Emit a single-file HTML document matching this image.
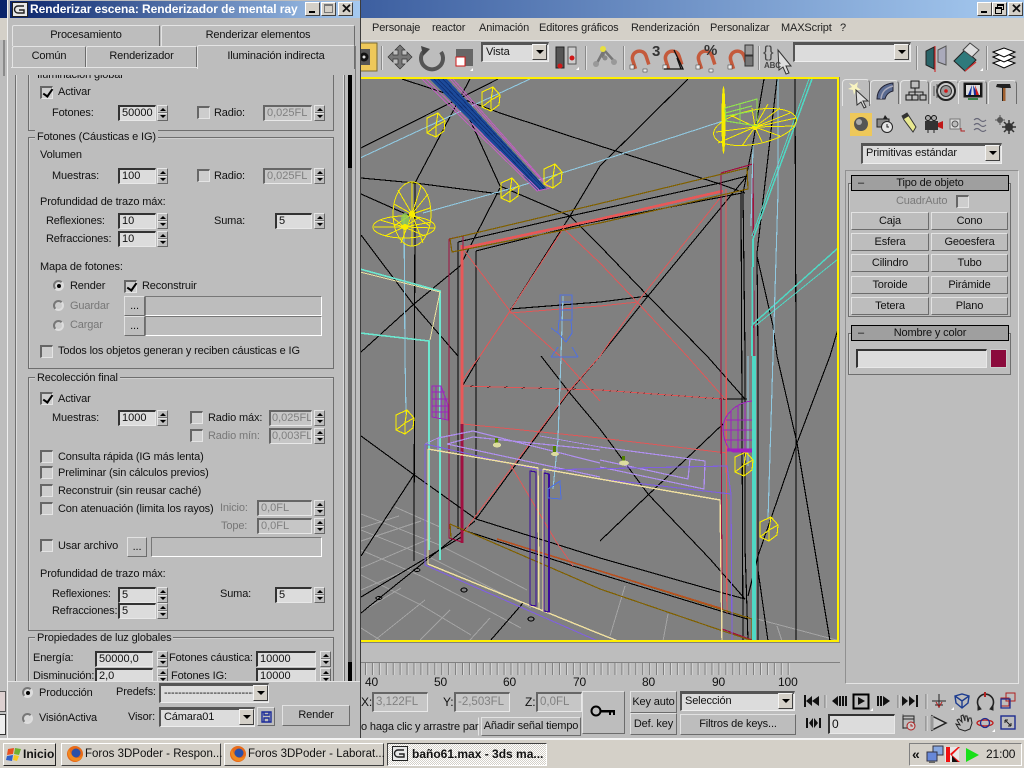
<!DOCTYPE html>
<html><head><meta charset="utf-8"><title>3ds max</title>
<style>
html,body{margin:0;padding:0;width:1024px;height:768px;overflow:hidden;background:#bdbdbd}
*{box-sizing:border-box}
#r{position:relative;width:1024px;height:768px;overflow:hidden;font:11px/14px "Liberation Sans",sans-serif;color:#111;letter-spacing:-.14px}
#r div,#r i,#r svg,#r span{position:absolute}
.t{white-space:nowrap}
.g{color:#777}
.i{background:#dcdcdc;border-top:2px solid #333;border-left:2px solid #333;border-right:1px solid #e8e8e8;border-bottom:1px solid #e8e8e8;padding-left:2px;white-space:nowrap;line-height:12px;font-style:normal;font-size:11px;letter-spacing:0}
.d{background:#c6c6c6;color:#808080;border-top:2px solid #666;border-left:2px solid #666;padding-left:2px}
.sp{width:11px;height:16px;border:1px solid;border-color:#e6e6e6 #666 #666 #e6e6e6;background:linear-gradient(#bdbdbd 0 6px,#777 6px 7px,#e6e6e6 7px 8px,#bdbdbd 8px)}
.sp::before,.sp::after{content:"";position:absolute;left:2px;border-left:3px solid transparent;border-right:3px solid transparent}
.sp::before{top:2px;border-bottom:3px solid #000}
.sp::after{bottom:2px;border-top:3px solid #000}
.cb{width:13px;height:13px;background:#cdcdcd;border-top:2px solid #666;border-left:2px solid #666;border-right:1px solid #e4e4e4;border-bottom:1px solid #e4e4e4}
.ck::after{content:"";position:absolute;left:3px;top:-1px;width:4px;height:8px;border:solid #000;border-width:0 2px 2px 0;transform:rotate(35deg)}
.ra{width:11px;height:11px;border-radius:50%;background:#d8d8d8;border:2px solid;border-color:#777 #ddd #ddd #777}
.ro::after{content:"";position:absolute;left:1.5px;top:1.5px;width:4px;height:4px;border-radius:50%;background:#000}
.gr{border:1px solid #6e6e6e;box-shadow:inset 1px 1px 0 #cfcfcf}
.lb{background:#bdbdbd;padding:0 2px}
.b{background:#bdbdbd;border:1px solid;border-color:#e2e2e2 #6c6c6c #6c6c6c #e2e2e2;text-align:center;white-space:nowrap;font-size:11px}
.f{border:1px solid;border-color:#777 #fff #fff #777;background:#bdbdbd}
.sel{background:#dcdcdc;border-top:3px solid #555;border-left:2px solid #555;border-right:1px solid #eee;border-bottom:1px solid #eee;white-space:nowrap;padding-left:3px;font-size:11px;line-height:14px}
.ar{width:15px;height:16px;background:#d4d0c8;border:1px solid;border-color:#f4f4f4 #404040 #404040 #f4f4f4}
.ar::after{content:"";position:absolute;left:3px;top:5px;border-left:4px solid transparent;border-right:4px solid transparent;border-top:4px solid #000}
.sep{width:2px;background:#8a8a8a;border-right:1px solid #e2e2e2}
.m{top:21px;font-size:11px;white-space:nowrap;color:#222}
.tb{top:743px;height:23px;background:#d4d0c8;border:1px solid;border-color:#fff #404040 #404040 #fff;white-space:nowrap;font-size:11.5px;line-height:21px;letter-spacing:0}
.wb{width:15px;height:14px;top:2px;background:#d4d0c8;border:1px solid;border-color:#fff #404040 #404040 #fff}
.tab{background:#bdbdbd;border:1px solid #e4e4e4;border-right:1px solid #6c6c6c;border-bottom:0;border-radius:2px 2px 0 0;text-align:center;font-size:11px;line-height:19px}
.rh{background:#9f9f9f;border:1px solid #000;text-align:center;font-size:11px;line-height:14px;height:16px}
.ct{width:29px;height:24px;top:80px;background:#bdbdbd;border:1px solid #e4e4e4;border-right:1px solid #6c6c6c;border-bottom:0;border-radius:4px 4px 0 0}
</style></head><body><div id="r">

<!-- main title -->
<div style="left:0;top:0;width:1024px;height:18px;background:linear-gradient(90deg,#0a246a 0,#3d5fa0 360px,#a6caf0 1024px)"></div>
<div class="wb" style="left:977px"><i style="left:3px;bottom:2px;width:6px;height:2px;background:#000"></i></div>
<div class="wb" style="left:992px"><i style="left:4px;top:1px;width:7px;height:6px;border:1px solid #000;border-top-width:2px"></i><i style="left:2px;top:4px;width:7px;height:7px;border:1px solid #000;border-top-width:2px;background:#d4d0c8"></i></div>
<div class="wb" style="left:1008px"><span class="t" style="left:2px;top:-1px;font-size:13px;font-weight:bold">✕</span></div>
<div style="left:360px;top:18px;width:664px;height:22px;background:#d4d0c8"></div>
<span class="m" style="left:372px">Personaje</span>
<span class="m" style="left:432px">reactor</span>
<span class="m" style="left:479px">Animación</span>
<span class="m" style="left:539px">Editores gráficos</span>
<span class="m" style="left:631px">Renderización</span>
<span class="m" style="left:710px">Personalizar</span>
<span class="m" style="left:781px">MAXScript</span>
<span class="m" style="left:840px">?</span>

<!-- toolbar -->
<div style="left:360px;top:40px;width:664px;height:37px;background:#bdbdbd;border-top:1px solid #e4e4e4"></div>
<svg style="left:360px;top:41px" width="664" height="36" viewBox="360 41 664 36">
 <rect x="360" y="43" width="17" height="28" fill="#eec85a" stroke="#7a6a30"/>
 <rect x="360" y="49" width="10" height="16" fill="#555"/><circle cx="364" cy="57" r="4.500" fill="#111"/><circle cx="364" cy="57" r="1.500" fill="#ddd"/>
 <path d="M400 45l5 5h-3v5h5v-3l5 5-5 5v-3h-5v5h3l-5 5-5-5h3v-5h-5v3l-5-5 5-5v3h5v-5h-3z" fill="#777" stroke="#333" stroke-width=".7"/>
 <path d="M423 52a11 11 0 1 0 18 0" fill="none" stroke="#555" stroke-width="4"/><path d="M421 46l9 3-7 7z" fill="#444"/>
 <rect x="456" y="49" width="17" height="17" fill="#666"/><rect x="456" y="57" width="9" height="9" fill="#fff" stroke="#d01818"/>
 <rect x="556" y="47" width="8" height="21" fill="#555" stroke="#222"/><circle cx="560" cy="66" r="2.500" fill="#d01818"/>
 <rect x="568" y="47" width="8" height="17" fill="#ccc" stroke="#555"/><circle cx="572" cy="58" r="2.500" fill="#d01818"/>
 <path d="M604 50l-7 13M604 50l10 11M604 50l-1 8" stroke="#777" stroke-width="2.500"/><circle cx="603" cy="49" r="3" fill="#e8e040"/><circle cx="596" cy="64" r="3" fill="#999"/><circle cx="614" cy="62" r="3" fill="#999"/><circle cx="605" cy="58" r="2.500" fill="#888"/>
 <g fill="none" stroke="#c45a3c" stroke-width="3.500">
 <path id="mg" d="M633 67V58a7 7 0 0 1 14 0V67" transform="rotate(-18 640 60)"/><path d="M666 67V58a7 7 0 0 1 14 0V67" transform="rotate(-18 673 60)"/><path d="M699 67V58a7 7 0 0 1 14 0V67" transform="rotate(-18 706 60)"/><path d="M731 67V58a7 7 0 0 1 14 0V67" transform="rotate(-18 738 60)"/></g>
 <g fill="#eee" stroke="#333" stroke-width=".5"><rect x="630" y="65" width="4" height="4"/><rect x="643" y="69" width="4" height="3"/><rect x="663" y="65" width="4" height="4"/><rect x="696" y="65" width="4" height="4"/><rect x="709" y="69" width="4" height="3"/><rect x="728" y="65" width="4" height="4"/></g>
 <path d="M664 69H683L674 50" fill="none" stroke="#111" stroke-width="1.3"/><path d="M677 58l4 11" stroke="#111" stroke-width="1.3"/>
 <rect x="745" y="45" width="8" height="10" fill="#999" stroke="#333"/><rect x="745" y="56" width="8" height="10" fill="#777" stroke="#333"/>
 <path d="M934 47v22l-8-4v-14z" fill="#2a6468" stroke="#222"/><path d="M935 46v26" stroke="#d03030" stroke-width="1.200"/><path d="M938 50l8-4v19l-8-3z" fill="#aab" stroke="#555"/>
 <path d="M954 61l11-11 11 10-11 11z" fill="#2f7a7c" stroke="#222"/><path d="M963 50l7-7 9 7-7 7z" fill="#ddd" stroke="#444"/><path d="M965 71l11-9" stroke="#d03030" stroke-width="1.300"/>
 <g fill="#fff" stroke="#000"><path d="M993 63l11-4 11 4-11 5z"/><path d="M993 57l11-4 11 4-11 5z"/><path d="M993 52l11-4 11 4-11 5z"/></g>
 <path d="M576 70h3v-3z" fill="#fff"/><path d="M470 71h3v-3z" fill="#fff"/><path d="M980 71h3v-3z" fill="#fff"/>
 <path d="M778 50l13 16-5 0 3 7-3 1-3-7-4 3z" fill="#ddd" stroke="#333"/>
</svg>
<span class="t" style="left:763px;top:46px;font-size:16px;color:#444">{}</span>
<span class="t" style="left:764px;top:59px;font-size:8px;font-weight:bold;color:#444">ABC</span>
<span class="t" style="left:652px;top:45px;font-size:15px;font-weight:bold;color:#333">3</span>
<span class="t" style="left:704px;top:44px;font-size:15px;font-weight:bold;color:#333">%</span>
<i class="sep" style="left:381px;top:46px;height:24px"></i><i class="sep" style="left:585px;top:46px;height:24px"></i><i class="sep" style="left:623px;top:46px;height:24px"></i><i class="sep" style="left:758px;top:46px;height:24px"></i><i class="sep" style="left:916px;top:46px;height:24px"></i><i class="sep" style="left:986px;top:46px;height:24px"></i>
<div class="sel" style="left:481px;top:42px;width:68px;height:20px">Vista</div><i class="ar" style="left:532px;top:44px"></i>
<div class="sel" style="left:793px;top:42px;width:118px;height:20px"></div><i class="ar" style="left:894px;top:44px"></i>

<!-- viewport -->
<svg style="left:360px;top:77px" width="480" height="566" viewBox="360 77 480 566" shape-rendering="crispEdges">
<defs>
 <g id="c" fill="none" stroke="#f8ec00" stroke-width="1.100"><path d="M-9-7L2-12 9-4 8 6 0 12-9 8zM9-4L0 1-9 8M2-12L0 1 0 12"/></g>
</defs>
<rect x="360" y="77" width="480" height="566" fill="#808080"/>
<!-- floor grid -->
<g fill="none" stroke="#a4a4a4" stroke-width="1">
 <path d="M361 528l38-12M361 541l60-20M361 568l70-30M361 590l50-22M361 612l40-24M375 640l50-40M420 640l30-30M470 640l20-22M361 514l36 14 40 16 40 20 50 26M361 530l70 28 60 30 40 20M361 550l60 26 70 36 30 16M361 575l60 30 50 30M395 507l45 20M380 640l-19-12"/>
 <path d="M625 586l-15 50M668 614l-5 27M757 619l83 22M777 626l5 15"/>
</g>
<!-- black -->
<g fill="none" stroke="#000" stroke-width="1.100">
 <path d="M498 79L361 148M402 79L460 98 500 113 600 146 720 184 745 193M470 79L415 183 414 561"/>
 <path d="M460 98L500 186 570 216M500 188L460 266 414 304 361 352"/>
 <path d="M361 178L415 183 500 194M361 194L415 218M361 235L413 304 458 356M361 436L413 474 476 519M415 473L361 556"/>
 <path d="M458 242V529M476 251V519M458 242L570 216 720 183 747 176M476 251L583 224 742 193M476 519L600 558 723 593 745 599M460 529L573 566 747 619"/>
 <path d="M688 79L600 166 570 216 510 311 480 356 463 385M747 176L648 296 600 356 569 392 476 519M570 216L600 246 648 296 707 356 745 399M541 356L569 392 600 429 648 494 710 559 745 599M723 424L647 496 600 541"/>
 <path d="M510 309L600 302 648 296M463 386L600 390 723 399 747 399"/>
 <path d="M361 597L463 536M361 613L475 521M490 641L523 603"/>
 <path d="M764 79L753 143 743 193 745 356 745 547 748 641M795 79L796 356 796 641M777 79L757 253 758 356 758 570 768 641M757 256L773 326 777 356 797 443 830 641M830 356L797 443 758 556 748 596M838 329L830 356M758 570V641"/>
 <path d="M741 193L743 641"/>
</g>
<g fill="none" stroke="#000" stroke-width="1"><ellipse cx="417" cy="570" rx="3" ry="1.500"/><ellipse cx="379" cy="598" rx="3" ry="1.500"/><ellipse cx="464" cy="590" rx="3" ry="2"/><ellipse cx="531" cy="619" rx="3" ry="2"/></g>
<!-- salmon -->
<g fill="none" stroke="#e05858" stroke-width="1">
 <path d="M563 229L510 311 480 356 463 379M463 249L510 311 560 356 600 401M563 228L600 263 638 303 687 356 725 399M720 198L640 299 600 356 569 391 463 533M510 313L600 306 638 302M463 386L600 390 723 399M463 424L600 438 727 453M510 464L557 543 573 566"/>
</g>
<path d="M463 248L600 219 723 191" fill="none" stroke="#e85858" stroke-width="2.600"/>
<path d="M462 245V424" stroke="#e85858" stroke-width="3"/><path d="M462 424V543" stroke="#a01040" stroke-width="3"/>
<path d="M726 189V356L727 613" fill="none" stroke="#e85858" stroke-width="1.400"/>
<!-- crimson -->
<g fill="none" stroke="#a01040" stroke-width="1.200">
 <path d="M449 239V538L462 542M449 239L463 236V250M721 173L753 164 754 356V640M721 173V356L722 629 752 640"/>
</g>
<!-- olive -->
<g fill="none" stroke="#806000" stroke-width="1.200">
 <path d="M450 239L598 204 747 168 748 189 600 223 452 252zM450 524L600 589 723 631 750 640M450 524L451 538M600 571L752 619V640"/>
</g>
<path d="M497 539L600 571 723 609" stroke="#b85020" stroke-width="1.600" fill="none"/>
<!-- teal -->
<g fill="none" stroke="#4fd8c4">
 <path d="M812 79L753 239" stroke-width="1.500"/><path d="M809 79L752 236" stroke-width="1"/><path d="M753 239L752 356" stroke-width="2"/><path d="M754 356V641" stroke-width="4"/>
 <path d="M838 248L753 324" stroke-width="1.500"/><path d="M838 259L755 326" stroke-width="1"/>
 <path d="M360 269L440 291V560M360 333L429 341V550" stroke-width="1.600" stroke="#6ce8d0"/>
</g>
<!-- lightblue -->
<g fill="none" stroke="#90c8e0" stroke-width="1.100">
 <path d="M778 79L778 193 773 356 768 519M723 121L600 161 520 186 423 213M530 79L360 158M404 216L405 356 406 414M753 146L751 226M748 356V466M563 296L561 356 558 439 553 489"/>
</g>
<path d="M360 272L440 292 430 340" stroke="#e8e0a0" fill="none"/>
<!-- beam -->
<path d="M430 79H447L547 189 538 191z" fill="#1c4a9a"/>
<g stroke="#0e2c70" stroke-width=".8"><path d="M434 79L541 190M438 79L544 189M443 79L546 189"/></g>
<g fill="none" stroke="#c060c0" stroke-width="1"><path d="M422 79L537 191 550 188 453 79M426 79L540 191M450 79L548 187"/></g>
<!-- yellow cubes -->
<use href="#c" x="436" y="125"/><use href="#c" x="491" y="99"/><use href="#c" x="510" y="190"/><use href="#c" x="553" y="176"/><use href="#c" x="405" y="422"/><use href="#c" x="744" y="464"/><use href="#c" x="769" y="529"/>
<!-- spot left -->
<g fill="none" stroke="#f8ec00" stroke-width="1">
 <ellipse cx="412" cy="214" rx="19" ry="32"/><ellipse cx="404" cy="227" rx="31" ry="11"/>
 <path d="M412 214V182M412 214L421 186M412 214L428 194M412 214L430 208M412 214L430 226M412 214L423 243M412 214V246M412 214L401 243M412 214L394 226M412 214L394 204M412 214L398 190M404 227L374 227M404 227L380 220M404 227L392 217M404 227L420 217M404 227L432 222M404 227L435 228M404 227L425 236M404 227L404 238M404 227L385 236"/>
</g>
<ellipse cx="405" cy="220" rx="4" ry="7" fill="#90d050" opacity=".8"/>
<circle cx="412" cy="214" r="3" fill="#f8ec00"/><circle cx="405" cy="227" r="3" fill="#f8ec00"/>
<!-- spot right -->
<g fill="none" stroke="#f8ec00" stroke-width="1">
 <ellipse cx="755" cy="127" rx="42" ry="17" transform="rotate(-11 755 127)"/>
 <path d="M755 127L790 113M755 127L796 118M755 127L780 108M755 127L795 126M755 127L780 136M755 127L762 142M755 127L742 146M755 127L718 143M755 127L716 132M755 127L730 115M755 127L752 108M755 127L768 104"/>
</g>
<ellipse cx="723.500" cy="120" rx="2" ry="34" fill="#f8ec00"/>
<circle cx="755" cy="127" r="3" fill="#f8ec00"/>
<g fill="none" stroke="#90e050" stroke-width="1.200"><path d="M725 108L757 99 757 126 726 121zM725 113L752 106M726 116L753 111M740 104V123"/></g>
<!-- counter -->
<g fill="none" stroke="#b090f0" stroke-width="1.200">
 <path d="M438 438L473 431 600 463M438 452V438M447 444L600 477M447 444L473 437 600 450M600 447L690 459 705 461 704 489 600 467M690 459L688 479 600 460"/>
 <path d="M425 444L438 438M600 447L540 436" stroke-width=".8"/>
</g>
<g fill="none" stroke="#8060e0" stroke-width="1.100"><path d="M425 444V565L600 642M425 444L540 470 727 466 731 494 732 640M600 479L731 494"/></g>
<g fill="none" stroke="#f0e0a0" stroke-width="1.400"><path d="M428 449L538 468 539 609M428 449V564L600 634 618 641M543 469L600 479 720 500 722 641M543 469V611"/></g>
<g fill="none" stroke="#3a0a9a" stroke-width="1.200"><path d="M530 471V605L536 606V472zM544 473V611L549 612V474z"/></g>
<path d="M549 474V612" stroke="#3a0a9a" stroke-width="2.200"/>
<!-- purple mesh -->
<g fill="none" stroke="#a020c0" stroke-width="1"><path d="M432 386H441L448 405V420L432 417zM432 392H445M432 399H448M432 406H448M432 412H448M436 386V418M441 386V419M445 396V420"/></g>
<g fill="none" stroke="#a020c0" stroke-width="1"><path d="M752 401C735 403 724 415 723 427 723 438 727 449 733 452H752M745 402V451M738 405V452M731 411V451M726 420H752M723 430H752M724 440H752"/></g>
<path d="M727 450L752 450" stroke="#a020c0" stroke-width="2.600"/>
<!-- blue lamp -->
<g fill="none" stroke="#4f70e0" stroke-width="1"><path d="M560 295H572V320H560zM561 302H571M561 310H571M559 320L558 333 566 342 572 333 571 320M551 328L558 333M551 357H578M551 357L558 347M578 357L572 347M548 489L560 481 561 499 548 498z"/></g>
<!-- bulbs -->
<g><rect x="495" y="438" width="3" height="6" fill="#508000"/><ellipse cx="497" cy="445" rx="4" ry="2.500" fill="#dcdca0"/><rect x="553" y="446" width="3" height="8" fill="#508000"/><ellipse cx="555" cy="454" rx="4" ry="2" fill="#dcdca0"/><rect x="622" y="456" width="3" height="8" fill="#508000"/><ellipse cx="624" cy="463" rx="5" ry="2.500" fill="#dcdca0"/></g>
<!-- frame -->
<path d="M360 78H838V641H361" fill="none" stroke="#ffef00" stroke-width="2"/>
</svg>

<!-- timeline -->
<div style="left:361px;top:662px;width:479px;height:1px;background:#808080"></div>
<svg style="left:361px;top:663px" width="430" height="14"><defs><pattern id="tk" width="6.930" height="12" patternUnits="userSpaceOnUse" x="4"><rect width="1" height="12" fill="#7c7c7c"/><rect x="1" width="1" height="12" fill="#d8d8d8"/></pattern></defs><rect width="430" height="12" fill="url(#tk)"/></svg>
<span class="t" style="left:365px;top:675px;font-size:12px">40</span>
<span class="t" style="left:434px;top:675px;font-size:12px">50</span>
<span class="t" style="left:503px;top:675px;font-size:12px">60</span>
<span class="t" style="left:573px;top:675px;font-size:12px">70</span>
<span class="t" style="left:642px;top:675px;font-size:12px">80</span>
<span class="t" style="left:712px;top:675px;font-size:12px">90</span>
<span class="t" style="left:778px;top:675px;font-size:12px">100</span>

<!-- status -->
<span class="t" style="left:361px;top:695px;font-size:12px">X:</span><div class="i d" style="left:372px;top:692px;width:56px;height:20px;line-height:16px;font-size:11.5px">3,122FL</div>
<span class="t" style="left:443px;top:695px;font-size:12px">Y:</span><div class="i d" style="left:454px;top:692px;width:56px;height:20px;line-height:16px;font-size:11.5px">-2,503FL</div>
<span class="t" style="left:525px;top:695px;font-size:12px">Z:</span><div class="i d" style="left:536px;top:692px;width:46px;height:20px;line-height:16px;font-size:11.5px">0,0FL</div>
<div class="b" style="left:582px;top:691px;width:43px;height:43px"></div>
<svg style="left:590px;top:704px" width="28" height="16"><circle cx="6" cy="7" r="4.500" fill="none" stroke="#000" stroke-width="2"/><path d="M11 6H25V11H23V8.500H21V11H19V8.500H11z" fill="#000"/></svg>
<div class="f" style="left:361px;top:717px;width:118px;height:19px;border-color:#bdbdbd #e4e4e4 #bdbdbd #bdbdbd"></div>
<span class="t" style="left:361px;top:720px;font-size:11px">o haga clic y arrastre par</span>
<div class="b" style="left:481px;top:717px;width:100px;height:19px;line-height:17px">Añadir señal tiempo</div>
<div class="b" style="left:630px;top:691px;width:47px;height:22px;line-height:21px">Key auto</div>
<div class="b" style="left:630px;top:713px;width:47px;height:22px;line-height:21px">Def. key</div>
<div class="sel" style="left:680px;top:691px;width:115px;height:20px">Selección</div><i class="ar" style="left:778px;top:693px"></i>
<div class="b" style="left:680px;top:714px;width:116px;height:21px;line-height:19px">Filtros de keys...</div>
<svg style="left:800px;top:690px" width="224" height="46" viewBox="800 690 224 46">
 <g fill="#111">
 <path d="M804 695h2v12h-2zM806 701l6-5v10zM812 701l7-5v10z"/>
 <path d="M832 701l6-5v10zM839 696h2v10h-2zM842 696h2v10h-2zM845 696h2v10h-2z"/>
 <rect x="853.500" y="694.500" width="15" height="14" fill="none" stroke="#000" stroke-width="2"/><path d="M858 697l7 4-7 4z"/>
 <path d="M877 696h2v10h-2zM880 696h2v10h-2zM883 696l7 5-7 5z"/>
 <path d="M902 696l6 5-6 5zM909 696l6 5-6 5zM916 695h2v12h-2z"/>
 <path d="M807 718h2v10h-2zM810 723l4-5v10zM815 718l4 5-4 5zM820 718h2v10h-2z" transform="translate(-1 0)"/>
 </g>
 <path d="M825 695v13M898 695v13M926 694v15M926 716v15M903 714v15" stroke="#777"/><path d="M826 695v13M899 695v13M927 694v15M927 716v15" stroke="#e4e4e4"/>
 <g fill="none" stroke="#222" stroke-width="1">
  <path d="M903 716h11v12h-11zM903 719h11"/><circle cx="911" cy="726" r="4" stroke="#b02020" fill="#ccc"/><path d="M911 724v2h2" stroke="#b02020"/>
  <path d="M932 701h14M939 694v14M935 705h8"/><path d="M936 702l3 5 3-5" stroke="#b02020"/>
  <path d="M955 696l7-2 7 2-1 7-6 5-6-5zM955 696l7 5 7-5M962 701v7" stroke="#1c3c90" stroke-width="1.400"/>
  <path d="M980 708a8 8 0 1 1 11 0" stroke-width="1.600"/><path d="M985 692v5" stroke="#b02020" stroke-width="2"/><path d="M978 706l3 3-3 1zM993 706l-3 3 3 1z" fill="#222"/>
  <path d="M1001 698h8v8h-8zM1006 693h9v8h-9z" stroke="#b02020"/><path d="M1001 699h9v9h-9z" stroke="#1c2c90" stroke-width="1.300"/>
  <path d="M932 716l14 7-14 7z" stroke-width="1.500" fill="#ccc"/><path d="M932 716v14" stroke="#999" stroke-width="3"/>
  <path d="M956 724l3 5 6 2 5-2 2-6-1-5-2 0-1 4-1-6-2 0 0 5-2-6-2 1 1 6-3-3-2 1 3 5z" fill="#bbb"/>
  <ellipse cx="985" cy="723" rx="8" ry="3" stroke="#c01818" stroke-width="1.300"/><circle cx="985" cy="723" r="4.500" stroke="#1c2c90" stroke-width="1.300" fill="none"/>
  <rect x="1001" y="716" width="14" height="13" stroke="#1c2c90" stroke-width="1.400"/><path d="M1005 720l6 6M1005 720v3M1005 720h3M1011 726v-3M1011 726h-3"/>
 </g>
 <path d="M951 710h3v-3z" fill="#fff"/><path d="M870 711h3v-3z" fill="#fff"/><path d="M992 732h3v-3z" fill="#fff"/>
</svg>
<div class="i" style="left:828px;top:714px;width:67px;height:20px;line-height:16px;font-size:12px">0</div>

<!-- command panel -->
<div style="left:840px;top:78px;width:184px;height:610px;background:#bdbdbd"></div>
<div class="ct" style="left:842px;top:79px;width:28px;height:27px;border-bottom:0;background:#bdbdbd"></div>
<div class="ct" style="left:870px"></div><div class="ct" style="left:900px"></div><div class="ct" style="left:930px"></div><div class="ct" style="left:958px"></div><div class="ct" style="left:988px"></div>
<svg style="left:840px;top:78px" width="184" height="64" viewBox="840 78 184 64">
 <path d="M852 87l-3-4 5 2 4-3-1 5 4 3-5 0-2 5-1-5-5-1z" fill="#f8f4c0"/>
 <path d="M856 90l12 11-5 0 3 6-2 1-3-6-4 3z" fill="#ddd" stroke="#333"/>
 <path d="M877 99c0-9 6-15 16-16v8c-4 1-7 4-8 8z" fill="#5a6a90" stroke="#223"/><path d="M881 99c1-8 5-11 12-13" stroke="#aab" stroke-width="1.500" fill="none"/>
 <g fill="none" stroke="#222" stroke-width="1.100"><rect x="911" y="81" width="8" height="7"/><rect x="906" y="95" width="6" height="5"/><rect x="912" y="95" width="6" height="5"/><rect x="920" y="95" width="6" height="5"/><path d="M915 88v7M909 95v-3h14v3"/></g>
 <circle cx="946" cy="91" r="9" fill="#ccc" stroke="#222" stroke-width="2"/><circle cx="946" cy="91" r="5.500" fill="#999" stroke="#333"/><circle cx="946" cy="91" r="1.800" fill="#d01818"/>
 <path d="M934 86v10M937 84v14" stroke="#555"/>
 <rect x="964" y="83" width="18" height="14" fill="#111" stroke="#222"/><rect x="966" y="85" width="14" height="10" fill="#ddd"/><path d="M972 85l-4 10h3zM973 85l5 10h-4z" fill="#1030a0"/><path d="M975 85l4 10h-3z" fill="#d01818"/><rect x="968" y="98" width="10" height="2" fill="#388048"/>
 <path d="M997 84h13l1 4-6 0v13h-3v-13l-6-1z" fill="#222"/><rect x="1003" y="88" width="2.500" height="13" fill="#a06030"/>
 <rect x="850" y="113" width="22" height="23" fill="#eec85a"/><circle cx="861" cy="124" r="7" fill="#555"/><circle cx="859" cy="122" r="3" fill="#aaa"/>
 <path d="M877 119h12v8h-12z" fill="#888" stroke="#222"/><circle cx="887" cy="127" r="5.500" fill="#e4e4e4" stroke="#222"/><path d="M887 124v3h2" stroke="#222" fill="none"/><path d="M885 115l3 4h-5z" fill="#222"/>
 <path d="M902 116l5-3 9 14-3 5-9-12z" fill="#e8e890" stroke="#333"/><path d="M902 116l5-3 2 3-5 3z" fill="#333"/>
 <rect x="925" y="121" width="13" height="9" fill="#333"/><circle cx="928" cy="118" r="2.500" fill="#aaa" stroke="#111"/><circle cx="934" cy="118" r="2.500" fill="#aaa" stroke="#111"/><path d="M938 123l5-2v8l-5-2z" fill="#c01818"/><path d="M928 130v3M934 130v3" stroke="#222"/>
 <rect x="950" y="119" width="10" height="10" fill="#ddd" stroke="#777"/><circle cx="955" cy="124" r="3" fill="#bbb" stroke="#555"/><path d="M961 128v3h4" stroke="#b02020" fill="none"/>
 <path d="M974 120q3-3 6 0t6 0M974 125q3-3 6 0t6 0M974 130q3-3 6 0t6 0" stroke="#667" stroke-width="1.200" fill="none"/>
 <circle cx="1009" cy="127" r="4" fill="#333"/><circle cx="1000" cy="120" r="3" fill="#555"/><path d="M1009 120v14M1002 127h14M1004 122l10 10M1014 122l-10 10" stroke="#333" stroke-width="1.500"/><path d="M1000 115v10M995 120h10" stroke="#555"/>
</svg>
<div class="sel" style="left:861px;top:143px;width:141px;height:21px;line-height:15px">Primitivas estándar</div><i class="ar" style="left:985px;top:145px"></i>
<div style="left:845px;top:170px;width:174px;height:514px;border:1px solid;border-color:#909090 #e4e4e4 #e4e4e4 #909090"></div>
<div class="gr" style="left:848px;top:183px;width:163px;height:134px"></div>
<div class="rh" style="left:851px;top:175px;width:158px"><span class="t" style="left:6px;top:0">–</span>Tipo de objeto</div>
<span class="t g" style="left:896px;top:194px;color:#7a7a7a">CuadrAuto</span><i class="cb" style="left:956px;top:195px"></i>
<div class="b" style="left:851px;top:212px;width:78px;height:18px;line-height:16px">Caja</div><div class="b" style="left:931px;top:212px;width:77px;height:18px;line-height:16px">Cono</div>
<div class="b" style="left:851px;top:233px;width:78px;height:18px;line-height:16px">Esfera</div><div class="b" style="left:931px;top:233px;width:77px;height:18px;line-height:16px">Geoesfera</div>
<div class="b" style="left:851px;top:254px;width:78px;height:18px;line-height:16px">Cilindro</div><div class="b" style="left:931px;top:254px;width:77px;height:18px;line-height:16px">Tubo</div>
<div class="b" style="left:851px;top:276px;width:78px;height:18px;line-height:16px">Toroide</div><div class="b" style="left:931px;top:276px;width:77px;height:18px;line-height:16px">Pirámide</div>
<div class="b" style="left:851px;top:297px;width:78px;height:18px;line-height:16px">Tetera</div><div class="b" style="left:931px;top:297px;width:77px;height:18px;line-height:16px">Plano</div>
<div class="gr" style="left:848px;top:333px;width:163px;height:42px"></div>
<div class="rh" style="left:851px;top:325px;width:158px"><span class="t" style="left:6px;top:0">–</span>Nombre y color</div>
<div class="i" style="left:856px;top:349px;width:131px;height:19px"></div>
<div style="left:990px;top:349px;width:17px;height:19px;background:#8b0a3c;border:1px solid #ccc"></div>

<!-- bottom edge + taskbar -->
<div style="left:0;top:738px;width:1024px;height:2px;background:#f4f4f4"></div>
<div style="left:0;top:740px;width:1024px;height:28px;background:#d4d0c8"></div>
<div class="tb" style="left:3px;width:53px;font-weight:bold;padding-left:19px;font-size:12px;border-color:#fff #222 #222 #fff">Inicio
 <svg style="left:2px;top:2px" width="16" height="16"><path d="M2 3l6-1-1 6-6 1z" fill="#e85020"/><path d="M9 2l6 1-2 6-5-1z" fill="#70b030"/><path d="M1 10l6-1-1 6-6-1z" fill="#3060c8"/><path d="M8 9l5 1-2 5-4-1z" fill="#f8c820"/></svg></div>
<div class="tb" style="left:61px;width:160px;padding-left:23px">Foros 3DPoder - Respon...
 <svg style="left:4px;top:1px" width="18" height="18"><circle cx="9" cy="9" r="8" fill="#e86a18"/><circle cx="10" cy="8" r="4.500" fill="#2a50a8"/><path d="M3 4c-3 6 1 12 7 12 4 0 6-3 7-6-2 3-6 4-9 2-3-2-4-5-5-8z" fill="#f08a20"/></svg></div>
<div class="tb" style="left:224px;width:160px;padding-left:23px">Foros 3DPoder - Laborat...
 <svg style="left:4px;top:1px" width="18" height="18"><circle cx="9" cy="9" r="8" fill="#e86a18"/><circle cx="10" cy="8" r="4.500" fill="#2a50a8"/><path d="M3 4c-3 6 1 12 7 12 4 0 6-3 7-6-2 3-6 4-9 2-3-2-4-5-5-8z" fill="#f08a20"/></svg></div>
<div class="tb" style="left:387px;width:160px;padding-left:24px;font-weight:bold;font-size:12px;border-color:#404040 #fff #fff #404040;background:repeating-conic-gradient(#fff 0 25%,#d4d0c8 0 50%) 0 0/2px 2px">baño61.max - 3ds ma...
 <svg style="left:4px;top:2px" width="16" height="15"><rect x=".5" y=".5" width="15" height="14" fill="#e8e8e8" stroke="#222"/><path d="M12 4H6a3.500 3.500 0 0 0 0 7h6V8H7" fill="none" stroke="#222" stroke-width="1.400"/></svg></div>
<div style="left:909px;top:743px;width:113px;height:23px;border:1px solid;border-color:#808080 #fff #fff #808080"></div>
<span class="t" style="left:912px;top:747px;font-size:14px;font-weight:bold">«</span>
<svg style="left:926px;top:745px" width="58" height="20"><rect x="7" y="1" width="10" height="9" fill="#88a8e0" stroke="#334"/><rect x="1" y="7" width="10" height="9" fill="#6888d8" stroke="#334"/><rect x="3" y="16" width="6" height="2" fill="#666"/><rect x="19" y="2" width="14" height="15" fill="#e8e8e8"/><path d="M20 2h4v15h-4zM24 9l8-7h2l-8 8 8 7h-3z" fill="#f01010"/><path d="M26 11l6 6H26z" fill="#111"/><path d="M40 3l13 7-13 7z" fill="#18e018"/></svg>
<span class="t" style="left:986px;top:747px;font-size:12px">21:00</span>

<!-- left strip -->
<div style="left:0;top:18px;width:8px;height:720px;background:#d4d0c8"></div>
<div style="left:0;top:40px;width:8px;height:698px;background:#bdbdbd"></div>
<i style="left:3px;top:40px;width:2px;height:36px;background:#8a8a8a"></i>
<div style="left:0;top:691px;width:6px;height:21px;background:#ddd0d0;border:1px solid #555;border-left:0"></div>
<div style="left:0;top:714px;width:6px;height:21px;background:#eee;border:1px solid #333;border-left:0"></div>

<!-- dialog -->
<div style="left:7px;top:0;width:354px;height:738px;background:#bdbdbd;border-left:1px solid #f0f0f0;border-right:1px solid #3c3c3c"></div>
<div style="left:10px;top:1px;width:350px;height:17px;background:linear-gradient(90deg,#0a246a,#a6caf0)"></div>
<svg style="left:12px;top:2px" width="16" height="15"><rect x=".5" y=".5" width="15" height="14" fill="#e8e8e8" stroke="#222"/><path d="M12 4H6a3.500 3.500 0 0 0 0 7h6V8H7" fill="none" stroke="#222" stroke-width="1.400"/></svg>
<span class="t" style="left:30px;top:2px;font-size:12px;font-weight:bold;color:#fff;letter-spacing:-.07px">Renderizar escena: Renderizador de mental ray</span>
<div class="wb" style="left:305px"><i style="left:3px;bottom:2px;width:6px;height:2px;background:#000"></i></div>
<div class="wb" style="left:321px"><i style="left:2px;top:1px;width:9px;height:9px;border:1px solid #777;border-top-width:2px"></i></div>
<div class="wb" style="left:338px"><span class="t" style="left:2px;top:-1px;font-size:13px;font-weight:bold">✕</span></div>
<div class="tab" style="left:12px;top:25px;width:148px;height:21px">Procesamiento</div>
<div class="tab" style="left:161px;top:25px;width:194px;height:21px">Renderizar elementos</div>
<div class="tab" style="left:12px;top:46px;width:74px;height:21px">Común</div>
<div class="tab" style="left:86px;top:46px;width:111px;height:21px">Renderizador</div>
<div class="tab" style="left:197px;top:45px;width:158px;height:24px;line-height:21px;z-index:2">Iluminación indirecta</div>
<div style="left:11px;top:67px;width:345px;height:1px;background:#e4e4e4"></div>
<i style="left:355px;top:46px;width:1px;height:636px;background:#7a7a7a"></i>
<!-- scroll region -->
<div style="left:14px;top:75px;width:338px;height:606px;overflow:hidden;background:#bdbdbd">
 <i style="left:1px;top:0;width:1px;height:606px;background:#707070"></i><i style="left:2px;top:0;width:1px;height:606px;background:#dcdcdc"></i>
 <i style="left:329px;top:0;width:1px;height:606px;background:#dcdcdc"></i><i style="left:330px;top:0;width:1px;height:606px;background:#707070"></i>
 <i style="left:334px;top:0;width:4px;height:606px;background:#6c6c6c"></i><i style="left:334px;top:0;width:4px;height:93px;background:#000"></i><i style="left:334px;top:587px;width:4px;height:19px;background:#000"></i>
</div>
<!-- groups (page coordinates) -->
<div class="gr" style="left:28px;top:60px;width:306px;height:71px;clip-path:inset(15px -2px -2px -2px)"></div>
<span class="t" style="left:37px;top:68px;clip-path:inset(7px 0 0 0)">Iluminación global</span>
<i class="cb ck" style="left:40px;top:86px"></i><span class="t" style="left:58px;top:85px">Activar</span>
<span class="t" style="left:52px;top:106px">Fotones:</span>
<div class="i" style="left:118px;top:105px;width:38px;height:16px">50000</div><i class="sp" style="left:157px;top:105px"></i>
<i class="cb" style="left:197px;top:106px"></i><span class="t" style="left:214px;top:106px">Radio:</span>
<div class="i d" style="left:263px;top:105px;width:49px;height:16px">0,025FL</div><i class="sp" style="left:314px;top:105px"></i>

<div class="gr" style="left:28px;top:137px;width:306px;height:232px"></div>
<span class="t lb" style="left:35px;top:130px">Fotones (Cáusticas e IG)</span>
<span class="t" style="left:40px;top:148px">Volumen</span>
<span class="t" style="left:52px;top:169px">Muestras:</span><div class="i" style="left:118px;top:168px;width:38px;height:16px">100</div><i class="sp" style="left:157px;top:168px"></i>
<i class="cb" style="left:197px;top:169px"></i><span class="t" style="left:214px;top:169px">Radio:</span>
<div class="i d" style="left:263px;top:168px;width:49px;height:16px">0,025FL</div><i class="sp" style="left:314px;top:168px"></i>
<span class="t" style="left:40px;top:195px">Profundidad de trazo máx:</span>
<span class="t" style="left:46px;top:214px">Reflexiones:</span><div class="i" style="left:118px;top:213px;width:38px;height:16px">10</div><i class="sp" style="left:157px;top:213px"></i>
<span class="t" style="left:214px;top:214px">Suma:</span><div class="i" style="left:275px;top:213px;width:37px;height:16px">5</div><i class="sp" style="left:314px;top:213px"></i>
<span class="t" style="left:46px;top:232px">Refracciones:</span><div class="i" style="left:118px;top:231px;width:38px;height:16px">10</div><i class="sp" style="left:157px;top:231px"></i>
<span class="t" style="left:40px;top:260px">Mapa de fotones:</span>
<i class="ra ro" style="left:53px;top:280px"></i><span class="t" style="left:70px;top:279px">Render</span>
<i class="cb ck" style="left:124px;top:280px"></i><span class="t" style="left:142px;top:279px">Reconstruir</span>
<i class="ra" style="left:53px;top:300px;background:#ccc"></i><span class="t g" style="left:70px;top:299px">Guardar</span>
<div class="b" style="left:124px;top:296px;width:21px;height:20px;line-height:18px">...</div><div class="f" style="left:145px;top:296px;width:177px;height:20px"></div>
<i class="ra" style="left:53px;top:320px;background:#ccc"></i><span class="t g" style="left:70px;top:318px">Cargar</span>
<div class="b" style="left:124px;top:316px;width:21px;height:20px;line-height:18px">...</div><div class="f" style="left:145px;top:316px;width:177px;height:20px"></div>
<i class="cb" style="left:40px;top:345px"></i><span class="t" style="left:58px;top:344px">Todos los objetos generan y reciben cáusticas e IG</span>

<div class="gr" style="left:28px;top:377px;width:306px;height:254px"></div>
<span class="t lb" style="left:35px;top:371px">Recolección final</span>
<i class="cb ck" style="left:40px;top:392px"></i><span class="t" style="left:58px;top:392px">Activar</span>
<span class="t" style="left:52px;top:411px">Muestras:</span><div class="i" style="left:118px;top:410px;width:38px;height:16px">1000</div><i class="sp" style="left:157px;top:410px"></i>
<i class="cb" style="left:190px;top:411px"></i><span class="t" style="left:208px;top:411px">Radio máx:</span>
<div class="i d" style="left:269px;top:410px;width:43px;height:16px;padding-left:1px;overflow:hidden">0,025FL</div><i class="sp" style="left:314px;top:410px"></i>
<i class="cb" style="left:190px;top:429px"></i><span class="t g" style="left:208px;top:429px">Radio mín:</span>
<div class="i d" style="left:269px;top:428px;width:43px;height:16px;padding-left:1px;overflow:hidden">0,003FL</div><i class="sp" style="left:314px;top:428px"></i>
<i class="cb" style="left:40px;top:450px"></i><span class="t" style="left:58px;top:450px">Consulta rápida (IG más lenta)</span>
<i class="cb" style="left:40px;top:466px"></i><span class="t" style="left:58px;top:466px">Preliminar (sin cálculos previos)</span>
<i class="cb" style="left:40px;top:484px"></i><span class="t" style="left:58px;top:484px">Reconstruir (sin reusar caché)</span>
<i class="cb" style="left:40px;top:502px"></i><span class="t" style="left:58px;top:502px">Con atenuación (limita los rayos)</span>
<span class="t g" style="left:220px;top:501px">Inicio:</span><div class="i d" style="left:257px;top:500px;width:55px;height:16px">0,0FL</div><i class="sp" style="left:314px;top:500px"></i>
<span class="t g" style="left:221px;top:519px">Tope:</span><div class="i d" style="left:257px;top:518px;width:55px;height:16px">0,0FL</div><i class="sp" style="left:314px;top:518px"></i>
<i class="cb" style="left:40px;top:539px"></i><span class="t" style="left:58px;top:539px">Usar archivo</span>
<div class="b" style="left:127px;top:537px;width:20px;height:20px;line-height:18px">...</div><div class="f" style="left:151px;top:537px;width:171px;height:20px"></div>
<span class="t" style="left:40px;top:567px">Profundidad de trazo máx:</span>
<span class="t" style="left:52px;top:587px">Reflexiones:</span><div class="i" style="left:118px;top:587px;width:38px;height:16px">5</div><i class="sp" style="left:157px;top:587px"></i>
<span class="t" style="left:220px;top:587px">Suma:</span><div class="i" style="left:275px;top:587px;width:37px;height:16px">5</div><i class="sp" style="left:314px;top:587px"></i>
<span class="t" style="left:52px;top:604px">Refracciones:</span><div class="i" style="left:118px;top:603px;width:38px;height:16px">5</div><i class="sp" style="left:157px;top:603px"></i>

<div class="gr" style="left:28px;top:637px;width:306px;height:60px"></div>
<span class="t lb" style="left:35px;top:631px">Propiedades de luz globales</span>
<span class="t" style="left:33px;top:651px">Energía:</span><div class="i" style="left:95px;top:651px;width:58px;height:16px">50000,0</div><i class="sp" style="left:157px;top:651px"></i>
<span class="t" style="left:169px;top:651px">Fotones cáustica:</span><div class="i" style="left:256px;top:651px;width:60px;height:16px">10000</div><i class="sp" style="left:320px;top:651px"></i>
<span class="t" style="left:33px;top:669px">Disminución:</span><div class="i" style="left:95px;top:668px;width:58px;height:16px">2,0</div><i class="sp" style="left:157px;top:668px"></i>
<span class="t" style="left:171px;top:669px">Fotones IG:</span><div class="i" style="left:256px;top:668px;width:60px;height:16px">10000</div><i class="sp" style="left:320px;top:668px"></i>

<!-- dialog bottom -->
<div style="left:8px;top:681px;width:352px;height:57px;background:#bdbdbd;border-top:1px solid #e4e4e4"></div>
<i class="ra ro" style="left:22px;top:687px"></i><span class="t" style="left:39px;top:686px">Producción</span>
<span class="t" style="left:116px;top:685px">Predefs:</span>
<div class="sel" style="left:159px;top:683px;width:110px;height:20px;line-height:14px;overflow:hidden">-----------------------------</div><i class="ar" style="left:253px;top:685px"></i>
<i class="ra" style="left:22px;top:713px"></i><span class="t" style="left:39px;top:711px">VisiónActiva</span>
<span class="t" style="left:128px;top:710px">Visor:</span>
<div class="sel" style="left:159px;top:707px;width:96px;height:20px">Cámara01</div><i class="ar" style="left:239px;top:709px"></i>
<div class="b" style="left:257px;top:707px;width:18px;height:19px"><svg style="left:3px;top:3px" width="11" height="12"><path d="M1 1h9v10H1zM3 1v3h5V1M3 11V7h5v4" fill="none" stroke="#1a2a9a" stroke-width="1.400"/></svg></div>
<div class="b" style="left:282px;top:705px;width:68px;height:21px;line-height:19px">Render</div>
</div></body></html>
